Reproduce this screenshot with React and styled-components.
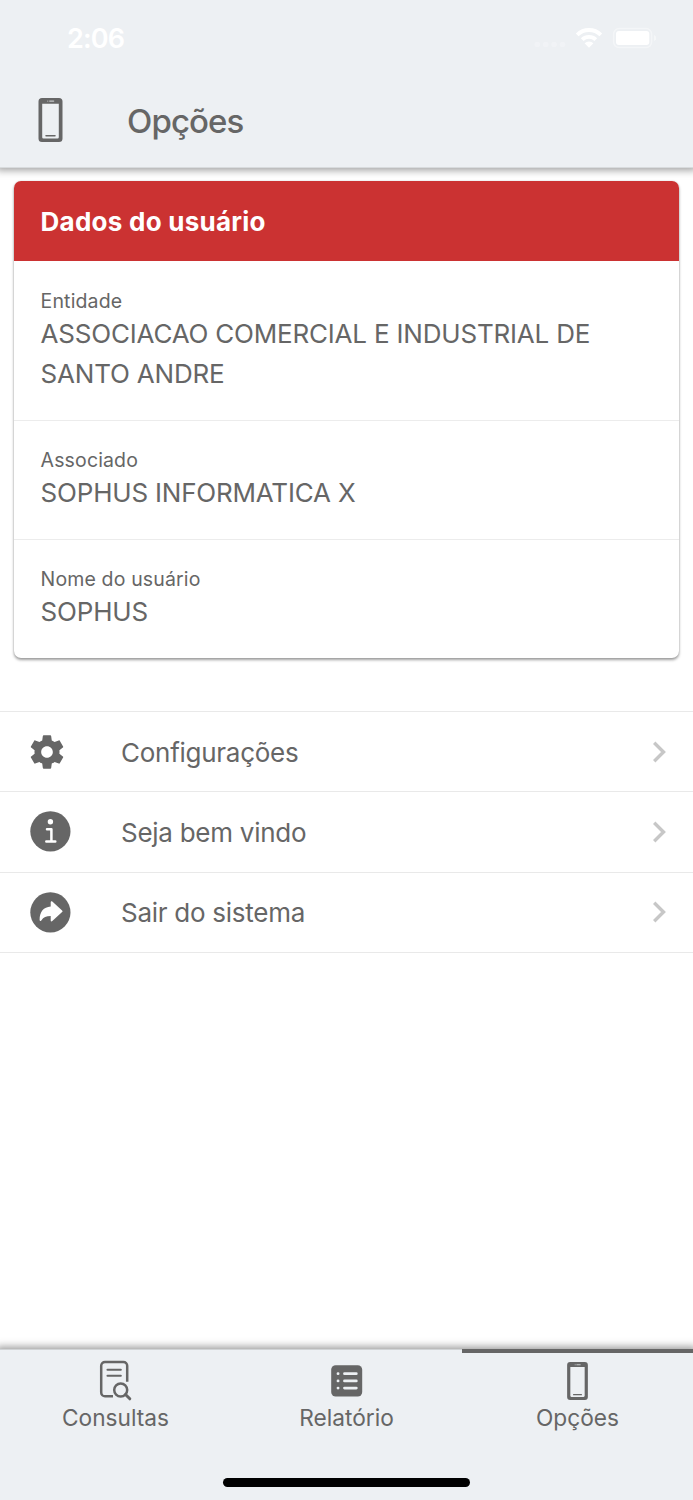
import styled, { createGlobalStyle } from "styled-components"

const GlobalStyle = createGlobalStyle`
  * {
    box-sizing: border-box;
  }

  body {
    margin: 0;
    background: #fff;
    color: #666;
    font-family: Inter, "Liberation Sans", sans-serif;
  }

  svg {
    display: block;
    flex: none;
  }
`

const Screen = styled.div`
  display: flex;
  flex-direction: column;
  width: 693px;
  height: 1500px;
  overflow: hidden;
`

const Header = styled.header`
  flex: none;
  height: 168px;
  background: #edf0f3;
  border-bottom: 1px solid #d8dbdd;
  box-shadow: 0 -2px 8px 4px rgba(0, 0, 0, 0.4);
`

const StatusBar = styled.div`
  display: flex;
  align-items: center;
  justify-content: space-between;
  height: 74px;
  padding: 2px 37px 0 67px;
  color: #fff;
`

const Clock = styled.div`
  padding-top: 1px;
  font-size: 27px;
  font-weight: 600;
  line-height: 32px;
  letter-spacing: -0.8px;
`

const NavBar = styled.div`
  display: flex;
  align-items: center;
  height: 91px;
  padding-left: 38px;
`

const Title = styled.h1`
  margin: 2px 0 0 64px;
  font-size: 33px;
  font-weight: 500;
  line-height: 40px;
  letter-spacing: -0.9px;
`

const Main = styled.main`
  flex: 1;
`

const Card = styled.section`
  margin: 13px 13.6px 0;
  border-radius: 7px;
  overflow: hidden;
  box-shadow: 0 2px 3px rgba(0, 0, 0, 0.38), 0 0 2px rgba(0, 0, 0, 0.14);
`

const CardHeader = styled.h2`
  margin: 0;
  height: 80.3px;
  padding: 1px 27px 0;
  background: #cb3232;
  color: #fff;
  font-size: 26px;
  font-weight: 700;
  line-height: 80px;
  letter-spacing: 0.25px;
`

const Field = styled.div`
  padding: ${({ $first }) => ($first ? "27.4px 27px 26px" : "27px 27px 25.4px")};
  border-top: ${({ $first }) => ($first ? "0" : "1px solid #ececec")};
`

const Label = styled.div`
  font-size: 19.5px;
  line-height: 25.1px;
  letter-spacing: 0.14px;
`

const Value = styled.div`
  font-size: 26px;
  line-height: 40.2px;
  letter-spacing: -0.2px;
  white-space: pre-line;
`

const Menu = styled.ul`
  list-style: none;
  margin: 53.7px 0 0;
  padding: 0;
  border-bottom: 1px solid #e9e9e9;
`

const MenuItem = styled.li`
  display: flex;
  align-items: center;
  height: 80.2px;
  padding: 0 26px 0.4px 27px;
  border-top: 1px solid #e9e9e9;
`

const IconSlot = styled.div`
  width: 94px;
  padding-left: ${({ $indent }) => $indent}px;
`

const MenuText = styled.div`
  flex: 1;
  padding-top: 2.6px;
  font-size: 26px;
  line-height: 40px;
  letter-spacing: -0.27px;
`

const TabBar = styled.nav`
  flex: none;
  display: grid;
  grid-template-columns: repeat(3, 1fr);
  grid-template-rows: 129px 22px;
  background: #edf0f3;
  box-shadow: 0 2px 8px 4px rgba(0, 0, 0, 0.42);
`

const Tab = styled.div`
  display: flex;
  flex-direction: column;
  align-items: center;
  border-top: ${({ $active }) => ($active ? "4px solid #666" : "1px solid #d0d3d5")};
  padding-top: ${({ $active }) => ($active ? 9 : 10)}px;
`

const TabText = styled.div`
  margin-top: ${({ $active }) => ($active ? 2 : 1)}px;
  font-size: 22.7px;
  line-height: 32px;
`

const HomeIndicator = styled.div`
  grid-column: 1 / -1;
  justify-self: center;
  width: 247px;
  height: 8.5px;
  border-radius: 5px;
  background: #000;
`

const StatusIcons = () => (
  <svg width="122" height="22" viewBox="534 27 122 22" fill="#fff">
    <g opacity="0.25">
      <circle cx="537.3" cy="44.5" r="2.8" />
      <circle cx="545.7" cy="44.5" r="2.8" />
      <circle cx="554.1" cy="44.5" r="2.8" />
      <circle cx="562.5" cy="44.5" r="2.8" />
    </g>
    <path d="M577.2 34.8a16.8 16.8 0 0 1 23.6 0M582.2 39.6a9.8 9.8 0 0 1 13.6 0" fill="none" stroke="#fff" strokeWidth="3.9" />
    <path d="M584.6 43.3a6.3 6.3 0 0 1 8.8 0L589 47.8z" />
    <rect x="613.6" y="28.6" width="38" height="19" rx="5.5" fill="none" stroke="#fff" strokeOpacity="0.4" strokeWidth="1.5" />
    <rect x="616" y="31" width="33.3" height="14" rx="3" />
    <path d="M654 35c3 1 3 5 0 6z" opacity="0.45" />
  </svg>
)

const PhoneIcon = ({ width, height }) => (
  <svg width={width} height={height} viewBox="0 0 24 44">
    <path
      fill="#666"
      fillRule="evenodd"
      d="M3.5 0h17A3.5 3.5 0 0 1 24 3.5v37a3.5 3.5 0 0 1-3.5 3.5h-17A3.5 3.5 0 0 1 0 40.5v-37A3.5 3.5 0 0 1 3.5 0zM3.7 5.8v33.4a1.2 1.2 0 0 0 1.2 1.2h14.2a1.2 1.2 0 0 0 1.2-1.2V5.8z"
    />
    <path d="M7.5 37.8h9" stroke="#666" strokeWidth="1.5" strokeLinecap="round" />
    <path d="M11.2 3.1h4" stroke="#c4c6c8" strokeWidth="1.2" strokeLinecap="round" />
    <circle cx="9.3" cy="3.1" r="0.6" fill="#c4c6c8" />
  </svg>
)

const SearchDocIcon = () => (
  <svg width="34" height="41" viewBox="99 1360 34 41" fill="none" stroke="#666" strokeWidth="2.5">
    <path d="M113 1396.3h-8a3.8 3.8 0 0 1-3.8-3.8v-26.7a3.8 3.8 0 0 1 3.8-3.8h18.4a3.8 3.8 0 0 1 3.8 3.8v16" />
    <path d="M107.5 1369.7h13.3M107.5 1375.8h13.3" strokeWidth="2.1" strokeLinecap="round" />
    <circle cx="120.7" cy="1390" r="6.5" />
    <path d="M125.5 1394.5l4.3 4.3" strokeWidth="3" strokeLinecap="round" />
  </svg>
)

const ReportIcon = () => (
  <svg width="32" height="41" viewBox="330.8 1360 32 41">
    <rect x="331" y="1365.3" width="31" height="31.2" rx="4.5" fill="#666" />
    <g stroke="#edf0f3" strokeWidth="2.8" strokeLinecap="round">
      <path d="M344.3 1373.7h11.8M344.3 1380.9h11.8M344.3 1388.1h11.8" />
      <path d="M337.8 1373.7h.1M337.8 1380.9h.1M337.8 1388.1h.1" />
    </g>
  </svg>
)

const GearIcon = () => (
  <svg width="40" height="40" viewBox="0 0 24 24" fill="#666">
    <path d="M19.43 12.98c.04-.32.07-.64.07-.98s-.03-.66-.07-.98l2.11-1.65c.19-.15.24-.42.12-.64l-2-3.46c-.12-.22-.39-.3-.61-.22l-2.49 1c-.52-.4-1.08-.73-1.69-.98l-.38-2.65C14.46 2.18 14.25 2 14 2h-4c-.25 0-.46.18-.49.42l-.38 2.65c-.61.25-1.17.59-1.69.98l-2.49-1c-.23-.09-.49 0-.61.22l-2 3.46c-.13.22-.07.49.12.64l2.11 1.65c-.04.32-.07.65-.07.98s.03.66.07.98l-2.11 1.65c-.19.15-.24.42-.12.64l2 3.46c.12.22.39.3.61.22l2.49-1c.52.4 1.08.73 1.69.98l.38 2.65c.03.24.24.42.49.42h4c.25 0 .46-.18.49-.42l.38-2.65c.61-.25 1.17-.59 1.69-.98l2.49 1c.23.09.49 0 .61-.22l2-3.46c.12-.22.07-.49-.12-.64l-2.11-1.65zM12 15.5c-1.93 0-3.5-1.57-3.5-3.5s1.57-3.5 3.5-3.5 3.5 1.57 3.5 3.5-1.57 3.5-3.5 3.5z" />
  </svg>
)

const InfoIcon = () => (
  <svg width="41" height="41" viewBox="0 0 41 41">
    <circle cx="20.4" cy="20.4" r="20.1" fill="#666" />
    <circle cx="20.4" cy="10.8" r="2.7" fill="#fff" />
    <path d="M17 18.2h4.4v12M16.3 30.4h9" fill="none" stroke="#fff" strokeWidth="2.5" strokeLinecap="round" strokeLinejoin="round" />
  </svg>
)

const ShareIcon = () => (
  <svg width="41" height="41" viewBox="0 0 41 41">
    <circle cx="20.4" cy="20.4" r="20.1" fill="#666" />
    <path
      d="M20.7 10.2c0-1 .9-1.3 1.6-.6l9.8 8.9c.6.5.6 1.1 0 1.6l-9.8 8.9c-.7.7-1.6.4-1.6-.6v-4.5c-4.4 0-7.4 1.1-9.2 4.3-.6 1.1-1.9.9-1.9-.5 0-8 4-12.8 11.1-13.3z"
      fill="#fff"
    />
  </svg>
)

const Chevron = () => (
  <svg width="15" height="22" viewBox="0 0 15 22">
    <path d="M2.2 1.8l9.3 9.2-9.3 9.2" fill="none" stroke="#c7c7c7" strokeWidth="3.4" />
  </svg>
)

const fields = [
  { label: "Entidade", value: "ASSOCIACAO COMERCIAL E INDUSTRIAL DE\nSANTO ANDRE" },
  { label: "Associado", value: "SOPHUS INFORMATICA X" },
  { label: "Nome do usuário", value: "SOPHUS" },
]

const menu = [
  { text: "Configurações", icon: <GearIcon />, indent: 0 },
  { text: "Seja bem vindo", icon: <InfoIcon />, indent: 3 },
  { text: "Sair do sistema", icon: <ShareIcon />, indent: 3 },
]

const tabs = [
  { text: "Consultas", icon: <SearchDocIcon /> },
  { text: "Relatório", icon: <ReportIcon /> },
  { text: "Opções", icon: <PhoneIcon width={21} height={38} />, active: true },
]

const App = () => {
  return (
    <Screen>
      <GlobalStyle />
      <Header>
        <StatusBar>
          <Clock>2:06</Clock>
          <StatusIcons />
        </StatusBar>
        <NavBar>
          <PhoneIcon width={25} height={44} />
          <Title>Opções</Title>
        </NavBar>
      </Header>
      <Main>
        <Card>
          <CardHeader>Dados do usuário</CardHeader>
          {fields.map(({ label, value }, i) => (
            <Field key={label} $first={i === 0}>
              <Label>{label}</Label>
              <Value>{value}</Value>
            </Field>
          ))}
        </Card>
        <Menu>
          {menu.map(({ text, icon, indent }) => (
            <MenuItem key={text}>
              <IconSlot $indent={indent}>{icon}</IconSlot>
              <MenuText>{text}</MenuText>
              <Chevron />
            </MenuItem>
          ))}
        </Menu>
      </Main>
      <TabBar>
        {tabs.map(({ text, icon, active }) => (
          <Tab key={text} $active={active}>
            {icon}
            <TabText $active={active}>{text}</TabText>
          </Tab>
        ))}
        <HomeIndicator />
      </TabBar>
    </Screen>
  )
}

export default App
